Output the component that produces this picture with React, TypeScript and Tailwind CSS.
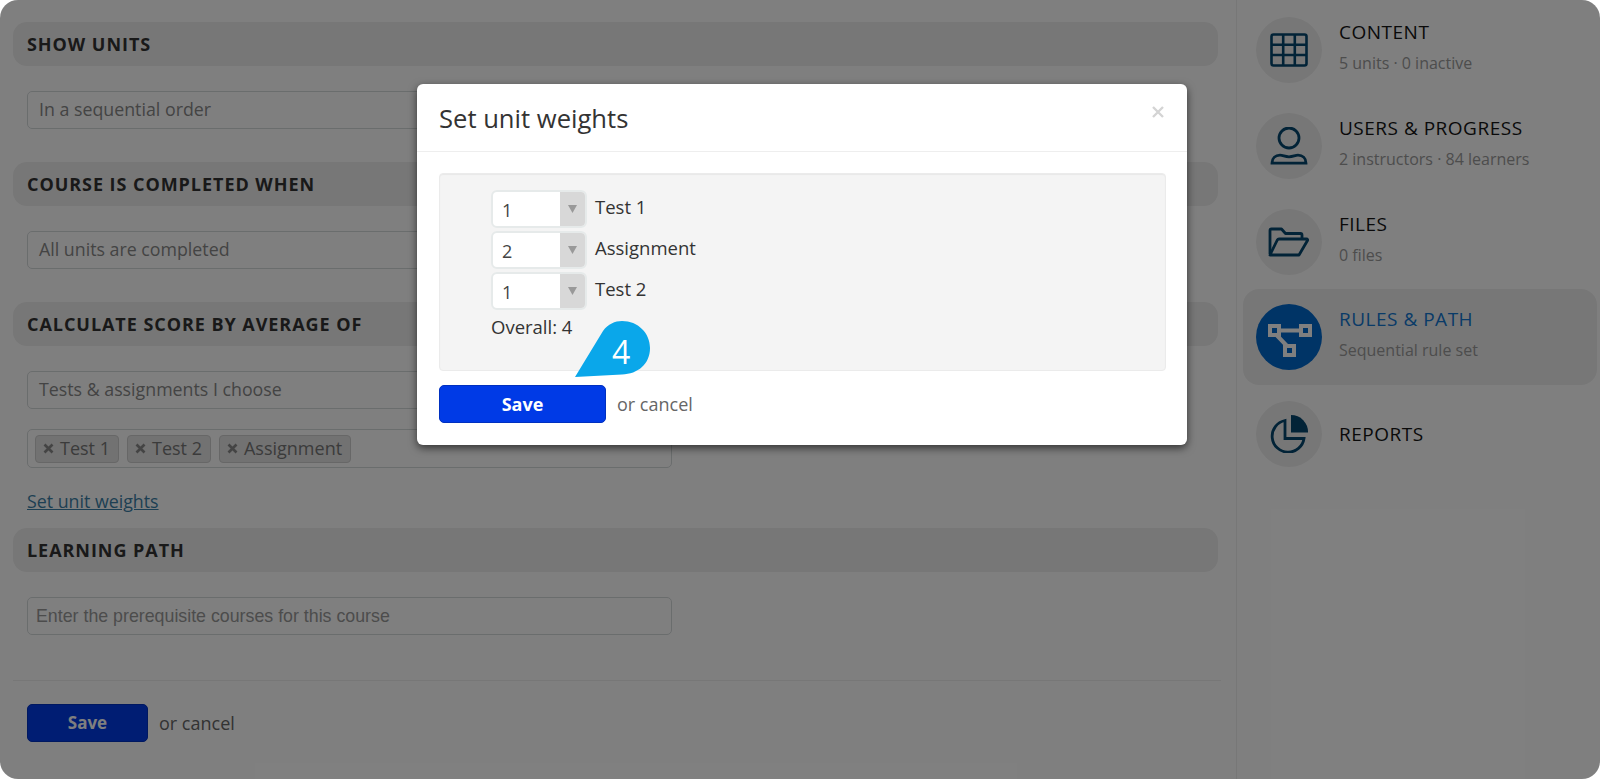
import type { ReactNode } from "react";

const font = "font-['Open_Sans',sans-serif]";

function SectionHeader({ title }: { title: string }) {
  return (
    <div className="flex h-[44px] items-center rounded-[14px] bg-[#eeeeee] pl-[14px]">
      <h2 className="text-[18px] font-bold tracking-[0.95px] text-[#333333]">{title}</h2>
    </div>
  );
}

function FakeSelect({ value }: { value: string }) {
  return (
    <div className="flex h-[38px] w-[645px] items-center rounded-[5px] border border-[#d5dadb] bg-white pb-[1px] pl-[11px] text-[17.8px] text-[#888888]">
      {value}
    </div>
  );
}

function Tag({ label }: { label: string }) {
  return (
    <div className="flex h-[28px] items-center gap-[6px] rounded-[4px] border border-[#cfcfcf] bg-[#e4e4e4] pl-[7px] pr-[8px] text-[18px] text-[#777777]">
      <svg width="11" height="11" viewBox="0 0 11 11">
        <path d="M1.5 1.5l8 8M9.5 1.5l-8 8" stroke="#888888" strokeWidth="2.6" />
      </svg>
      <span>{label}</span>
    </div>
  );
}

function NavItem({ icon, title, sub, active }: { icon: ReactNode; title: string; sub?: string; active?: boolean }) {
  return (
    <div className={active ? "flex h-[96px] items-center gap-[17px] rounded-[16px] bg-[#efefef] pl-[13px]" : "flex h-[66px] items-center gap-[17px] pl-[13px]"}>
      <div className={active ? "flex h-[66px] w-[66px] items-center justify-center rounded-full bg-[#0068cc]" : "flex h-[66px] w-[66px] items-center justify-center rounded-full bg-[#efefef]"}>
        {icon}
      </div>
      <div className={sub ? "flex flex-col pb-[6px]" : "flex flex-col"}>
        <span className={active ? "text-[19px] leading-[24px] tracking-[0.5px] text-[#1276d0]" : "text-[19px] leading-[24px] tracking-[0.5px] text-[#141414]"}>{title}</span>
        {sub && <span className="mt-[9px] text-[16px] leading-[21px] text-[#9a9a9a]">{sub}</span>}
      </div>
    </div>
  );
}

function WeightRow({ value, label }: { value: string; label: string }) {
  return (
    <div className="flex h-[41px] items-start">
      <div className="flex h-[38px] w-[96px] overflow-hidden rounded-[6px] border-2 border-[#e6eaea] bg-white">
        <div className="flex-1 pl-[9px] pt-[3px] text-[18px] leading-[30px] text-[#444444]">{value}</div>
        <div className="flex w-[25px] items-center justify-center bg-[#d8d8d8]">
          <svg width="9" height="8" viewBox="0 0 9 8">
            <path d="M0 0h9L4.5 8z" fill="#999999" />
          </svg>
        </div>
      </div>
      <span className="ml-[8px] text-[18.5px] leading-[34px] text-[#333333]">{label}</span>
    </div>
  );
}

const iconColor = "#04466e";

const GridIcon = (
  <svg width="38" height="34" viewBox="0 0 38 34" fill="none" stroke={iconColor} strokeWidth="2.6">
    <rect x="1.5" y="1.5" width="35" height="31" rx="2" />
    <path d="M1.5 11.7h35M1.5 22h35M13.2 1.5v31M24.8 1.5v31" />
  </svg>
);

const UserIcon = (
  <svg width="38" height="38" viewBox="0 0 38 38" fill="none" stroke={iconColor} strokeWidth="2.8">
    <circle cx="19" cy="11" r="10" />
    <path d="M2 36.200c0-5 3.500-8 8-8 3 0 5 1.600 9 1.600s6-1.600 9-1.600c4.500 0 8 3 8 8z" />
  </svg>
);

const FolderIcon = (
  <svg width="42" height="30" viewBox="0 0 42 30" fill="none" stroke={iconColor} strokeWidth="2.800" strokeLinejoin="round">
    <path d="M2 27V3.500C2 2.500 2.500 2 3.500 2h10l4 4.500h15c1 0 1.500.5 1.500 1.500v4" />
    <path d="M2 28h29l8.500-14.500c.4-.8 0-1.500-1-1.500H11c-.8 0-1.300.3-1.700 1z" />
  </svg>
);

const PathIcon = (
  <svg className="ml-[3px] mt-[8px]" width="45" height="34" viewBox="0 0 45 34" fill="none" stroke="#ffffff" strokeWidth="4">
    <rect x="2" y="2" width="9" height="9" />
    <rect x="33" y="2" width="9" height="9" />
    <rect x="17" y="22" width="9" height="9" />
    <path d="M11 6.500h22M8.500 11l10.500 11" />
  </svg>
);

const PieIcon = (
  <svg width="38" height="38" viewBox="0 0 38 38" fill="none">
    <path d="M15 5.500A16 16 0 1 0 34 23.500H15z" stroke={iconColor} strokeWidth="2.800" />
    <path d="M21 0a17 17 0 0 1 17 17.500H21z" fill={iconColor} />
  </svg>
);

export default function App() {
  return (
    <div className={`relative h-[779px] w-[1600px] overflow-hidden bg-white ${font}`}>
      <div className="flex h-full overflow-hidden rounded-[18px] bg-white">
        {/* main settings column */}
        <div className="w-[1237px] flex-shrink-0 border-r border-[#efefef] pl-[13px] pr-[16px] pt-[22px]">
          <div className="w-[1205px]">
            <SectionHeader title="SHOW UNITS" />
            <div className="ml-[14px] mt-[25px]"><FakeSelect value="In a sequential order" /></div>
            <div className="mt-[33px]"><SectionHeader title="COURSE IS COMPLETED WHEN" /></div>
            <div className="ml-[14px] mt-[25px]"><FakeSelect value="All units are completed" /></div>
            <div className="mt-[33px]"><SectionHeader title="CALCULATE SCORE BY AVERAGE OF" /></div>
            <div className="ml-[14px] mt-[25px]"><FakeSelect value="Tests & assignments I choose" /></div>
            <div className="ml-[14px] mt-[20px] flex h-[39px] w-[645px] items-center gap-[8px] rounded-[5px] border border-[#d5dadb] bg-white pl-[7px]">
              <Tag label="Test 1" />
              <Tag label="Test 2" />
              <Tag label="Assignment" />
            </div>
            <div className="ml-[14px] mt-[21px] h-[24px] text-[17.8px] leading-[24px] text-[#3b7ea6] underline">Set unit weights</div>
            <div className="mt-[15px]"><SectionHeader title="LEARNING PATH" /></div>
            <div className="ml-[14px] mt-[25px] flex h-[38px] w-[645px] items-center rounded-[5px] border border-[#d5dadb] bg-white pl-[8px] font-['Liberation_Sans',sans-serif] text-[17.8px] text-[#999999]">
              Enter the prerequisite courses for this course
            </div>
          </div>
          <div className="mt-[45px] w-[1208px] border-t border-[#efefef] pl-[14px] pt-[23px]">
            <div className="flex items-center gap-[11px]">
              <div className="flex h-[38px] w-[121px] items-center justify-center rounded-[5px] border border-[#0030c0] bg-[#003ae6] pb-[1px] text-[17px] font-bold text-white">Save</div>
              <span className="text-[18px] text-[#666666]">or cancel</span>
            </div>
          </div>
        </div>
        {/* sidebar */}
        <div className="flex flex-1 flex-col pl-[6px] pr-[3px] pt-[17px]">
          <NavItem icon={GridIcon} title="CONTENT" sub="5 units · 0 inactive" />
          <div className="mt-[30px]"><NavItem icon={UserIcon} title="USERS & PROGRESS" sub="2 instructors · 84 learners" /></div>
          <div className="mt-[30px]"><NavItem icon={FolderIcon} title="FILES" sub="0 files" /></div>
          <div className="mt-[14px]"><NavItem active icon={PathIcon} title="RULES & PATH" sub="Sequential rule set" /></div>
          <div className="mt-[16px]"><NavItem icon={PieIcon} title="REPORTS" /></div>
        </div>
      </div>

      {/* backdrop */}
      <div className="absolute inset-0 rounded-[18px] bg-black/50" />

      {/* dialog */}
      <div className="absolute left-[417px] top-[84px] h-[361px] w-[770px] rounded-[6px] bg-white shadow-[0_3px_9px_rgba(0,0,0,0.6)]">
        <div className="flex h-[68px] items-center justify-between border-b border-[#eeeeee] pl-[22px] pr-[23px]">
          <h1 className="mt-[3px] text-[25.6px] text-[#333333]">Set unit weights</h1>
          <svg className="mb-[11px]" width="12" height="12" viewBox="0 0 12 12">
            <path d="M1 1l10 10M11 1L1 11" stroke="#d4d4d4" strokeWidth="2.400" />
          </svg>
        </div>
        <div className="pl-[22px] pr-[21px] pt-[21px]">
          <div className="h-[198px] rounded-[4px] border border-[#ebebeb] bg-[#f4f4f4] pl-[51px] pt-[16px] shadow-[inset_0_1px_1px_rgba(0,0,0,0.05)]">
            <WeightRow value="1" label="Test 1" />
            <WeightRow value="2" label="Assignment" />
            <WeightRow value="1" label="Test 2" />
            <div className="mt-[2px] text-[18.5px] leading-[24px] text-[#333333]">Overall: 4</div>
          </div>
          <div className="mt-[14px] flex items-center gap-[11px]">
            <div className="flex h-[38px] w-[167px] items-center justify-center rounded-[5px] border border-[#0030c0] bg-[#003ae6] text-[18px] font-bold text-white">Save</div>
            <span className="text-[18px] text-[#666666]">or cancel</span>
          </div>
        </div>
      </div>

      {/* step bubble */}
      <div className="absolute left-[575px] top-[321px] flex h-[56px] w-[76px] items-start">
        <svg className="absolute inset-0" width="76" height="56" viewBox="0 0 76 56">
          <path d="M0 56L28 10C33 3 40 0 47 0C63 0 75 12 75 27C75 43 63 53 47 53.500Z" fill="#0aa7ea" />
        </svg>
        <span className="relative ml-[37px] mt-[9px] text-[32px] leading-[44px] text-white">4</span>
      </div>
    </div>
  );
}
